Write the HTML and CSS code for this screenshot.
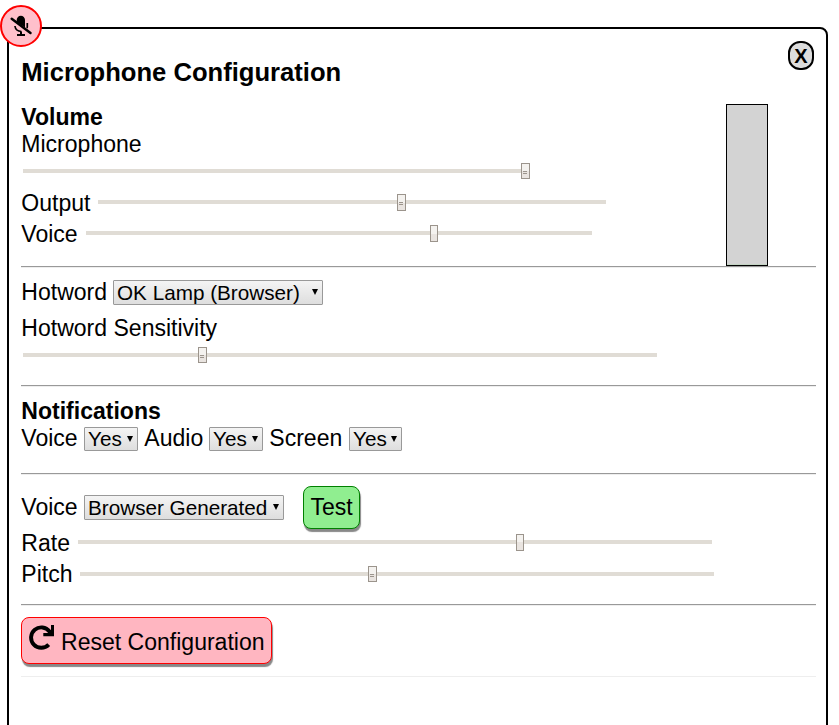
FILE: index.html
```html
<!DOCTYPE html>
<html lang="en">
<head>
<meta charset="utf-8">
<title>Microphone Configuration</title>
<link rel="stylesheet" href="styles.css">
</head>
<body>
<div class="mic">
  <svg width="24" height="24" viewBox="0 0 24 24" fill="none" stroke="#000">
    <path d="M7.700 6a4.150 4.300 0 0 1 8.300 0V13.500L7.700 8z" fill="#000" stroke="none"/>
    <path d="M5.900 12c.5 3.400 3 5.300 6.500 5.500M18.300 9v3.500c0 .8-.1 1.200-.3 1.600" stroke-width="1.700"/>
    <path d="M12 17.500v3M8 20.900h8" stroke-width="2"/>
    <path d="M2.700 4.700L21.500 18.900" stroke-width="2.500" stroke-linecap="round"/>
  </svg>
</div>
<main class="panel">
  <button class="close">X</button>
  <h1>Microphone Configuration</h1>
  <section class="volume">
    <div class="levels">
      <div class="line bold">Volume</div>
      <div class="line second">Microphone</div>
      <div class="slider microphone"><i class="thumb grip"></i></div>
      <div class="line output"><span>Output</span><div class="slider"><i class="thumb grip tall"></i></div></div>
      <div class="line speech"><span>Voice</span><div class="slider"><i class="thumb plain"></i></div></div>
    </div>
    <div class="meter"></div>
  </section>
  <hr>
  <section class="hotword">
    <div class="line"><span>Hotword</span><div class="select wide"><span>OK Lamp (Browser)</span><svg width="6" height="6" viewBox="0 0 6 6"><path d="M0 0h6L3 6z"/></svg></div></div>
    <div class="line label">Hotword Sensitivity</div>
    <div class="slider sensitivity"><i class="thumb grip"></i></div>
  </section>
  <hr>
  <section class="notifications">
    <div class="line bold">Notifications</div>
    <div class="line second">
      <span>Voice</span><div class="select yes"><span>Yes</span><svg width="6" height="6" viewBox="0 0 6 6"><path d="M0 0h6L3 6z"/></svg></div>
      <span class="audio">Audio</span><div class="select yes"><span>Yes</span><svg width="6" height="6" viewBox="0 0 6 6"><path d="M0 0h6L3 6z"/></svg></div>
      <span class="screen">Screen</span><div class="select yes last"><span>Yes</span><svg width="6" height="6" viewBox="0 0 6 6"><path d="M0 0h6L3 6z"/></svg></div>
    </div>
  </section>
  <hr>
  <section class="voice">
    <div class="line generator"><span>Voice</span><div class="select browser"><span>Browser Generated</span><svg width="6" height="6" viewBox="0 0 6 6"><path d="M0 0h6L3 6z"/></svg></div><button class="test">Test</button></div>
    <div class="line rate"><span>Rate</span><div class="slider"><i class="thumb plain"></i></div></div>
    <div class="line pitch"><span>Pitch</span><div class="slider"><i class="thumb grip"></i></div></div>
  </section>
  <hr>
  <button class="reset">
    <svg width="26" height="26" viewBox="0 0 26 26"><path d="M19.700 20.600A10.200 10.200 0 1 1 20.500 7.500l1.500 2" fill="none" stroke="#000" stroke-width="3.900"/><path d="M22 1h3v11.200H14.300V9h5.200l-1-3.500L22 7z"/></svg>
    <span>Reset Configuration</span>
  </button>
  <hr class="faint">
</main>
</body>
</html>
```
FILE: styles.css
```css
* { box-sizing: border-box; }
html { overflow: hidden; }
body {
  margin: 0;
  padding: 27px 0 0 7px;
  height: 725px;
  overflow: hidden;
  background: #fff;
  color: #000;
  font: 23.04px/26px "Liberation Sans", Arial, sans-serif;
}
.panel {
  position: relative;
  width: 821px;
  height: 720px;
  padding: 28px 10px 0 12px;
  border: 2px solid #000;
  border-radius: 8px;
}
.mic {
  position: absolute;
  z-index: 2;
  left: 0;
  top: 5px;
  width: 42px;
  height: 42px;
  border: 2px solid red;
  border-radius: 50%;
  background: pink;
}
.mic svg { display: block; margin: 7px 0 0 7px; }
.close {
  position: absolute;
  right: 12px;
  top: 12px;
  width: 26px;
  height: 29px;
  padding: 0;
  border: 2px solid #000;
  border-radius: 12px;
  background: #ddd;
  color: #000;
  font: bold 20px/27px "Liberation Sans", Arial, sans-serif;
}
h1 { margin: 0 0 17px; font-size: 25.6px; line-height: 30px; }
h1, .bold, .second, .label { padding-left: .3px; }
.line > span { padding-left: .3px; }
.notifications .second { padding-left: 0; }
hr { width: 795px; height: 2px; margin: 0; border: 0; border-top: 1px solid #999; border-bottom: 1px solid #eee; }
.line { display: flex; height: 26px; white-space: nowrap; }
.line.bold { font-weight: bold; }
.second { margin-top: 1px; }
.volume { display: flex; justify-content: space-between; width: 795px; height: 162px; }
.levels { width: 640px; }
.meter { width: 42px; height: 162px; margin-right: 48px; border: 1px solid #000; background: linear-gradient(#d3d3d3, #d3d3d3) top / 100% 159px no-repeat #c3d3c3; }
.slider {
  position: relative;
  flex: none;
  width: 508px;
  height: 16px;
  background: linear-gradient(#e0dcd5, #e0dcd5) 0 6px / 100% 4px no-repeat;
}
.thumb {
  position: absolute;
  top: 0;
  width: 9px;
  height: 16px;
  border: 1px solid #9b948c;
  background: linear-gradient(#f4f2ef 50%, #e9e4e0 50%);
}
.thumb.plain { width: 8px; height: 17px; }
.thumb.tall { height: 17px; }
.grip::after {
  content: "";
  display: block;
  width: 4px;
  height: 1px;
  margin: 7px 0 0 1px;
  border-top: 1px solid #9b948c;
  border-bottom: 1px solid #9b948c;
}
.microphone { margin: 6px 0 11px 2px; width: 507px; }
.microphone .thumb { left: 498px; }
.output > span { width: 77px; }
.output .slider { margin-top: 4px; }
.output .thumb { left: 299px; }
.speech { margin-top: 5px; }
.speech > span { width: 65px; }
.speech .slider { width: 506px; margin-top: 4px; }
.speech .thumb { left: 344px; }
.hotword { height: 117px; padding-top: 11px; }
.hotword .line > span { width: 92px; }
.hotword .label { margin-top: 10px; }
.sensitivity { width: 634px; margin: 6px 0 0 2px; }
.sensitivity .thumb { left: 175px; }
.select {
  display: flex;
  justify-content: space-between;
  flex: none;
  height: 25px;
  padding: 0 4px 0 3px;
  border: 1px solid #999;
  border-radius: 1px;
  background: linear-gradient(#f4f4f4, #dedede);
  font-size: 20.7px;
  line-height: 24px;
}
.select svg { margin-top: 8px; }
.wide { width: 210px; margin-top: 1px; }
.notifications { height: 86px; padding-top: 11px; }
.yes { width: 54px; height: 24px; margin-top: 2px; line-height: 22px; }
.yes.last { width: 53px; }
.notifications .second > span { width: 63px; }
.notifications .second > .audio { width: 65px; margin-left: 6px; }
.notifications .second > .screen { width: 80px; margin-left: 6px; }
.voice { height: 129px; padding-top: 11px; }
.generator { height: 43px; margin-bottom: 1px; }
.generator > span { width: 63px; margin-top: 8px; }
.browser { width: 200px; margin: 9px 19px 0 0; }
.test {
  width: 57px;
  height: 43px;
  padding: 0 0 2px;
  border: 1px solid green;
  border-radius: 8px;
  background: lightgreen;
  box-shadow: 1px 3px 1px #888;
  color: #000;
  font: inherit;
}
.rate > span { width: 57px; }
.rate .slider, .pitch .slider { width: 634px; }
.rate .slider { margin-top: 4px; }
.rate .thumb { left: 438px; }
.pitch { margin-top: 5px; }
.pitch > span { width: 59px; }
.pitch .slider { margin-top: 5px; }
.pitch .thumb { left: 288px; }
.reset {
  display: flex;
  width: 251px;
  height: 47px;
  margin: 11px 0 12px;
  padding: 6px 0 0 7px;
  border: 1px solid red;
  border-radius: 8px;
  background: lightpink;
  box-shadow: 1px 3px 1px #888;
  color: #000;
  font: inherit;
  white-space: nowrap;
}
.reset span { margin: 5px 0 0 6px; }
.faint { height: 1px; border-top-color: #eee; border-bottom: 0; }
```
